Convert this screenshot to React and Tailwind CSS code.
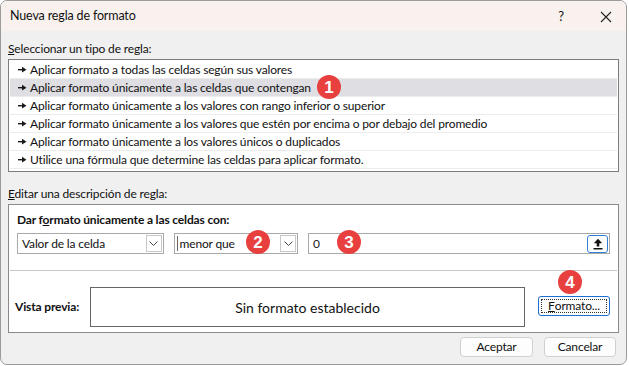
import React from 'react';

const rules = [
  'Aplicar formato a todas las celdas según sus valores',
  'Aplicar formato únicamente a las celdas que contengan',
  'Aplicar formato únicamente a los valores con rango inferior o superior',
  'Aplicar formato únicamente a los valores que estén por encima o por debajo del promedio',
  'Aplicar formato únicamente a los valores únicos o duplicados',
  'Utilice una fórmula que determine las celdas para aplicar formato.',
];

function RuleArrow() {
  return (
    <svg width="9" height="7" viewBox="0 0 9 7" className="flex-shrink-0">
      <rect x="0" y="3" width="4" height="1.4" fill="#1a1a1a" />
      <path d="M4 0.8 L8.5 3.7 L4 6.6 Z" fill="#1a1a1a" />
    </svg>
  );
}

function Chevron() {
  return (
    <svg width="9" height="5" viewBox="0 0 9 5">
      <path d="M0.5 0.5 L4.5 4.5 L8.5 0.5" fill="none" stroke="#444" strokeWidth="1" />
    </svg>
  );
}

function Badge({ n, className }) {
  return (
    <div
      className={`absolute flex items-center justify-center w-[24px] h-[24px] rounded-full bg-[#e8403e] text-white text-[17px] font-bold font-['Liberation_Sans',sans-serif] leading-none tracking-normal ${className}`}
    >
      {n}
    </div>
  );
}

export default function App() {
  return (
    <div className="relative w-[629px] h-[366px] bg-white overflow-hidden font-['Lato',sans-serif] text-[12px] tracking-[-0.15px] text-[#111]">
      <div className="w-[627px] h-[365px] border border-[#9b9b9b] rounded-[7px] bg-[#f0f0f0] flex flex-col overflow-hidden">
        {/* title bar */}
        <div className="h-[30px] bg-[#f9f1ee] flex items-center pl-[9px] pr-[14px] pt-[1px]">
          <span className="flex-1 text-[12.5px]">Nueva regla de formato</span>
          <span className="text-[13px] mr-[36px]">?</span>
          <svg width="12" height="12" viewBox="0 0 12 12">
            <path d="M1 1 L11 11 M11 1 L1 11" stroke="#222" strokeWidth="1.1" />
          </svg>
        </div>

        <div className="flex flex-col px-[7px]">
          <div className="h-[18px] mt-[9px] leading-[18px]">
            <u>S</u>eleccionar un tipo de regla:
          </div>
          <div className="mt-[1px] h-[113px] border border-[#7c7c7c] bg-white pt-[1px] px-[1px]">
            {rules.map((r, i) => (
              <div
                key={i}
                className={`h-[18px] flex items-center gap-[3px] pl-[8px] border-b border-[#ececec] whitespace-nowrap ${i === 1 ? 'bg-[#dedee3]' : ''}`}
              >
                <RuleArrow />
                <span>{r}</span>
              </div>
            ))}
          </div>

          <div className="h-[18px] mt-[13px] leading-[18px]">
            <u>E</u>ditar una descripción de regla:
          </div>
          <div className="mt-[1px] h-[129px] border border-[#8a8a8a] bg-white flex flex-col">
            <div className="px-[8px] pt-[6px]">
              <div className="font-bold h-[18px] leading-[18px]">
                Dar f<u>o</u>rmato únicamente a las celdas con:
              </div>
              <div className="flex items-center mt-[4px] h-[21px]">
                <div className="w-[147px] h-[21px] border border-[#a9a9a9] flex items-center pl-[4px] pr-[1px]">
                  <span className="flex-1">Valor de la celda</span>
                  <div className="w-[16px] h-[17px] border border-[#c8c8c8] flex items-center justify-center">
                    <Chevron />
                  </div>
                </div>
                <div className="ml-[10px] w-[125px] h-[21px] border border-[#a9a9a9] flex items-center pl-[2px] pr-[1px]">
                  <div className="w-[1px] h-[15px] bg-[#666] mr-[2px]" />
                  <span className="flex-1">menor que</span>
                  <div className="w-[16px] h-[17px] border border-[#c8c8c8] flex items-center justify-center">
                    <Chevron />
                  </div>
                </div>
                <div className="ml-[10px] w-[303px] h-[21px] border border-[#a9a9a9] flex items-center pl-[4px] pr-[1px]">
                  <span className="flex-1 text-[#222]">0</span>
                  <div className="w-[21px] h-[18px] border border-[#2f7fd6] rounded-[3px] flex items-center justify-center">
                    <svg width="10" height="12" viewBox="0 0 10 12">
                      <path d="M5 0.8 L9.2 5.2 L6.3 5.2 L6.3 8.6 L3.7 8.6 L3.7 5.2 L0.8 5.2 Z" fill="#111" />
                      <rect x="0.5" y="10" width="9" height="1.5" fill="#111" />
                    </svg>
                  </div>
                </div>
              </div>
            </div>
            <div className="mt-[16px] h-px bg-[#c8c8c8] mx-[1px]" />
            <div className="flex items-center pl-[6px] pt-[16px]">
              <span className="font-bold w-[75px] flex-shrink-0">Vista previa:</span>
              <div className="w-[435px] flex-shrink-0 h-[40px] border border-[#666] flex items-center justify-center text-[14px] tracking-normal">
                Sin formato establecido
              </div>
              <div className="ml-[13px] mt-[-2px] flex-shrink-0 w-[72px] h-[20px] border border-[#1a6fd0] rounded-[3px] bg-[#fdfdfd] p-[2px]">
                <div className="w-full h-full border border-dotted border-[#333] flex items-center justify-center leading-none">
                  <u>F</u>ormato...
                </div>
              </div>
            </div>
          </div>

          <div className="flex justify-end gap-[11px] mt-[4px] pr-[3px]">
            <button className="w-[73px] h-[20px] border border-[#d0d0d0] rounded-[4px] bg-[#fdfdfd] leading-none">
              Aceptar
            </button>
            <button className="w-[72px] h-[20px] border border-[#d0d0d0] rounded-[4px] bg-[#fdfdfd] leading-none">
              Cancelar
            </button>
          </div>
        </div>
      </div>

      <Badge n="1" className="left-[317px] top-[75px]" />
      <Badge n="2" className="left-[246px] top-[230px]" />
      <Badge n="3" className="left-[337px] top-[230px]" />
      <Badge n="4" className="left-[558px] top-[270px]" />
    </div>
  );
}
